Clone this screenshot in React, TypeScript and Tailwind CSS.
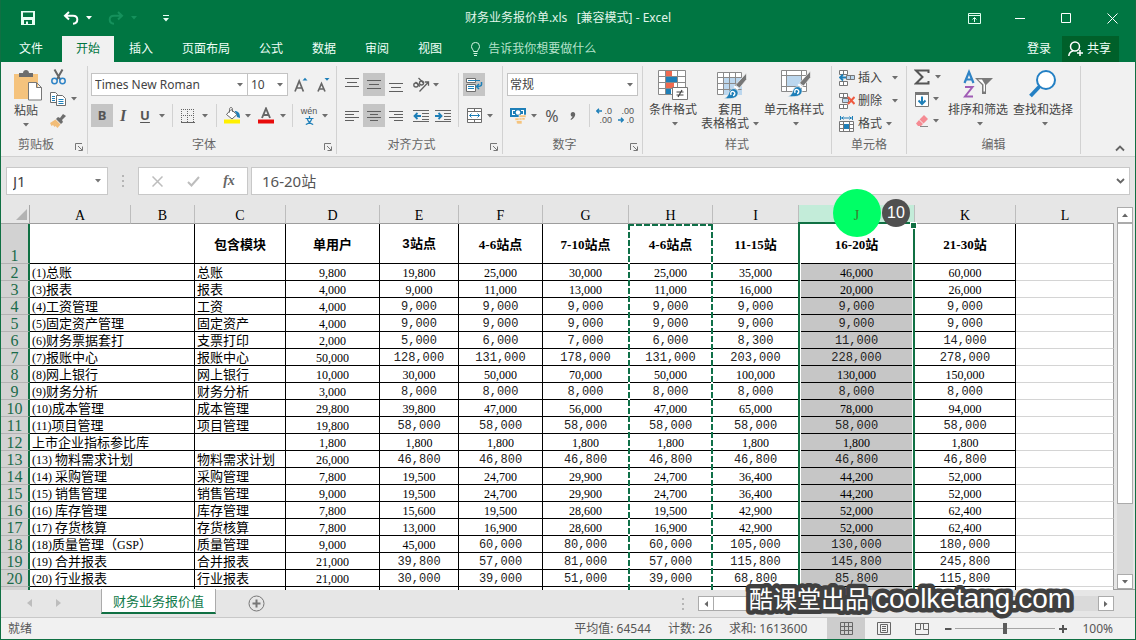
import React from "react";

const UI = "font-['Noto_Sans','Noto_Sans_CJK_SC',sans-serif]";
const SHEET = "font-['Liberation_Serif','Noto_Sans_CJK_SC',serif]";

type Row = { label: string; module: string; mono: number; values: string[] };

const rows: Row[] = [
  { label: "(1)总账", module: "总账", mono: 8, values: ["9,800", "19,800", "25,000", "30,000", "25,000", "35,000", "46,000", "60,000"] },
  { label: "(3)报表", module: "报表", mono: 8, values: ["4,000", "9,000", "11,000", "13,000", "11,000", "16,000", "20,000", "26,000"] },
  { label: "(4)工资管理", module: "工资", mono: 1, values: ["4,000", "9,000", "9,000", "9,000", "9,000", "9,000", "9,000", "9,000"] },
  { label: "(5)固定资产管理", module: "固定资产", mono: 1, values: ["4,000", "9,000", "9,000", "9,000", "9,000", "9,000", "9,000", "9,000"] },
  { label: "(6)财务票据套打", module: "支票打印", mono: 1, values: ["2,000", "5,000", "6,000", "7,000", "6,000", "8,300", "11,000", "14,000"] },
  { label: "(7)报账中心", module: "报账中心", mono: 1, values: ["50,000", "128,000", "131,000", "178,000", "131,000", "203,000", "228,000", "278,000"] },
  { label: "(8)网上银行", module: "网上银行", mono: 8, values: ["10,000", "30,000", "50,000", "70,000", "50,000", "100,000", "130,000", "150,000"] },
  { label: "(9)财务分析", module: "财务分析", mono: 1, values: ["3,000", "8,000", "8,000", "8,000", "8,000", "8,000", "8,000", "8,000"] },
  { label: "(10)成本管理", module: "成本管理", mono: 8, values: ["29,800", "39,800", "47,000", "56,000", "47,000", "65,000", "78,000", "94,000"] },
  { label: "(11)项目管理", module: "项目管理", mono: 1, values: ["19,800", "58,000", "58,000", "58,000", "58,000", "58,000", "58,000", "58,000"] },
  { label: "上市企业指标参比库", module: "", mono: 8, values: ["1,800", "1,800", "1,800", "1,800", "1,800", "1,800", "1,800", "1,800"] },
  { label: "(13) 物料需求计划", module: "物料需求计划", mono: 1, values: ["26,000", "46,800", "46,800", "46,800", "46,800", "46,800", "46,800", "46,800"] },
  { label: "(14) 采购管理", module: "采购管理", mono: 8, values: ["7,800", "19,500", "24,700", "29,900", "24,700", "36,400", "44,200", "52,000"] },
  { label: "(15) 销售管理", module: "销售管理", mono: 8, values: ["9,000", "19,500", "24,700", "29,900", "24,700", "36,400", "44,200", "52,000"] },
  { label: "(16) 库存管理", module: "库存管理", mono: 8, values: ["7,800", "15,600", "19,500", "28,600", "19,500", "42,900", "52,000", "62,400"] },
  { label: "(17) 存货核算", module: "存货核算", mono: 8, values: ["7,800", "13,000", "16,900", "28,600", "16,900", "42,900", "52,000", "62,400"] },
  { label: "(18)质量管理（GSP）", module: "质量管理", mono: 2, values: ["9,000", "45,000", "60,000", "80,000", "60,000", "105,000", "130,000", "180,000"] },
  { label: "(19) 合并报表", module: "合并报表", mono: 1, values: ["21,000", "39,800", "57,000", "81,000", "57,000", "115,800", "145,800", "245,800"] },
  { label: "(20) 行业报表", module: "行业报表", mono: 1, values: ["21,000", "30,000", "39,000", "51,000", "39,000", "68,800", "85,800", "115,800"] },
];

const headings = ["单用户", "3站点", "4-6站点", "7-10站点", "4-6站点", "11-15站", "16-20站", "21-30站"];

function Caret({ className = "" }: { className?: string }) {
  return (
    <svg className={"shrink-0 " + className} width="6" height="4" viewBox="0 0 6 4" fill="currentColor" aria-hidden="true">
      <path d="M0 0h6L3 3.5z" />
    </svg>
  );
}

function MenuArrow({ className = "w-2.5", label = "更多" }: { className?: string; label?: string }) {
  return (
    <button type="button" aria-label={label} className={"flex h-full items-center justify-center text-[#6e6e6e] " + className}>
      <Caret />
    </button>
  );
}

function Tool({ label, children, className = "w-[22px]", active = false }: { label: string; children: React.ReactNode; className?: string; active?: boolean }) {
  return (
    <button type="button" aria-label={label} className={"flex h-full shrink-0 items-center justify-center text-[#555] " + className + (active ? " bg-[#c5c5c5]" : "")}>
      {children}
    </button>
  );
}

function Group({ name, className, launcher = false, children }: { name: string; className: string; launcher?: boolean; children: React.ReactNode }) {
  return (
    <section aria-label={name} className={"flex shrink-0 flex-col pt-1 pb-0.5 " + className}>
      <div className="flex grow flex-col border-r border-[#d2d2d2]">
        <div className="h-[70px]">{children}</div>
        <div className="flex h-[18px] items-center text-xs leading-4 text-[#666]">
          <span className="grow text-center">{name}</span>
          {launcher && (
            <button type="button" aria-label={name + "设置"} className="flex w-4 justify-center pt-1">
              <svg width="9" height="9" viewBox="0 0 9 9" fill="none" stroke="#777">
                <path d="M.5 7V.5H7M3 3l4 4M7.5 3.500v4h-4" />
              </svg>
            </button>
          )}
        </div>
      </div>
    </section>
  );
}

function Lines({ rows: spec }: { rows: [number, number, number][] }) {
  return (
    <svg width="14" height="14" viewBox="0 0 14 14" stroke="#5f5f5f" aria-hidden="true">
      {spec.map(([y, a, b]) => (
        <path key={y} d={`M${a} ${y + 0.5}H${b}`} />
      ))}
    </svg>
  );
}

function Mixed({ text }: { text: string }) {
  return (
    <>
      {text.split(/([\x20-\x7e]+)/).map((part, i) => (i % 2 ? <span key={i} className="text-xs leading-[14px]">{part}</span> : part))}
    </>
  );
}

function TitleBar() {
  return (
    <header className="grid h-9 grid-cols-[1fr_auto_1fr] items-center bg-[#007642] text-white">
      <div className="flex items-center">
        <button type="button" aria-label="保存" className="ml-5">
          <svg width="14" height="14" viewBox="0 0 14 14">
            <path fill="#e8fff4" fillRule="evenodd" d="M0 0h14v14H0zM2 1.500v4.500h10V1.500zM3 9v4h2v-2.500h2V13h4V9z" />
          </svg>
        </button>
        <button type="button" aria-label="撤消" className="ml-[28px]">
          <svg width="16" height="14" viewBox="0 0 16 14" fill="none" stroke="#fff" strokeWidth="2">
            <path d="M6 1 2 4.700l4 3.800M2.500 4.700H10c3 0 4.300 1.700 4.300 3.800 0 2.500-1.800 4-4.300 4.200" />
          </svg>
        </button>
        <Caret className="ml-[7px]" />
        <button type="button" aria-label="恢复" className="ml-4" disabled>
          <svg width="16" height="14" viewBox="0 0 16 14" fill="none" stroke="#15915c" strokeWidth="2">
            <path d="M10 1l4 3.700-4 3.800M13.500 4.700H6c-3 0-4.300 1.700-4.300 3.800 0 2.500 1.800 4 4.300 4.200" />
          </svg>
        </button>
        <Caret className="ml-[7px] text-[#15915c]" />
        <button type="button" aria-label="自定义快速访问工具栏" className="ml-[26px]">
          <svg width="6" height="7" viewBox="0 0 6 7" fill="#e8fff4">
            <path d="M0 0h6v1H0zM0 3h6L3 6.500z" />
          </svg>
        </button>
      </div>
      <h1 className="text-xs whitespace-pre text-[#e0f5ea]">财务业务报价单.xls   [兼容模式] - Excel</h1>
      <div className="flex justify-end">
        <button type="button" aria-label="功能区显示选项" className="flex w-[46px] justify-center">
          <svg width="13" height="11" viewBox="0 0 13 11" fill="none" stroke="#e0fff0">
            <path d="M.5.5h12v10H.5zM.5 2.500h12M6.500 9V4.500M4.500 6.500l2-2 2 2" />
          </svg>
        </button>
        <button type="button" aria-label="最小化" className="flex w-[46px] justify-center">
          <svg width="11" height="11" viewBox="0 0 11 11" stroke="#fff"><path d="M0 5.500h10" /></svg>
        </button>
        <button type="button" aria-label="最大化" className="flex w-[46px] justify-center">
          <svg width="11" height="11" viewBox="0 0 11 11" fill="none" stroke="#fff"><path d="M.5.5h9v9h-9z" /></svg>
        </button>
        <button type="button" aria-label="关闭" className="flex w-[46px] justify-center">
          <svg width="11" height="11" viewBox="0 0 11 11" stroke="#fff"><path d="M.5.5l10 10M10.500.5l-10 10" /></svg>
        </button>
      </div>
    </header>
  );
}

function Tabs() {
  return (
    <nav className="flex h-[26px] items-stretch gap-px bg-[#007642] pl-1 text-xs text-[#f0fff8]">
      <button type="button" className="mr-1 px-3.5">文件</button>
      <button type="button" className="bg-[#f1f1f1] px-3.5 text-[#007642]">开始</button>
      {["插入", "页面布局", "公式", "数据", "审阅", "视图"].map((t) => (
        <button type="button" key={t} className="px-3.5">{t}</button>
      ))}
      <button type="button" className="ml-3.5 flex items-center gap-2 text-[#b5e2cb]">
        <svg width="9" height="14" viewBox="0 0 9 14" fill="none" stroke="#d4f5e4">
          <path d="M2.500 9.500C2.500 7.500.5 7 .5 4.400a4 4 0 0 1 8 0C8.500 7 6.500 7.500 6.500 9.500zM2.500 11.500h4M3 13.500h3" />
        </svg>
        告诉我你想要做什么
      </button>
      <button type="button" className="mr-2.5 ml-auto">登录</button>
      <button type="button" className="mr-4 flex items-center gap-1 bg-[#00602a] pr-2 pl-1.5">
        <svg width="15" height="16" viewBox="0 0 15 16" fill="none" stroke="#fff" strokeWidth="1.500">
          <circle cx="7" cy="5.500" r="4.500" />
          <path d="M.8 15c.2-3 1.800-4.300 4.200-5.200M12 9v6M9 12h6" />
        </svg>
        共享
      </button>
    </nav>
  );
}

function BrushOver() {
  return (
    <>
      <path fill="#777" stroke="#f1f1f1" strokeWidth=".7" d="M29.500 4v6.500L22.500 19l-4-3z" />
      <path fill="#fff" d="M18 16.500l4 3-1.500 1.500-4-3z" />
      <path fill="#1e7fb8" stroke="#f1f1f1" strokeWidth=".7" d="M6 29.500c4-.5 5-3 6-6 1.200-3.500 4.500-5 7.200-3s2.300 5.500-.2 7.500-7 1.800-13 1.500z" />
      <path fill="none" stroke="#fff" strokeWidth="1.400" d="M14 26c-1-3 1-4.500 3-3s0 3.500-1 3.500" />
    </>
  );
}

function Ribbon() {
  return (
    <div className="flex h-[95px] overflow-hidden border-b border-[#d0d0d0] bg-[#f1f1f1] text-xs text-[#444]">
      <Group name="剪贴板" className="w-[87px]" launcher>
        <div className="flex">
          <button type="button" className="mt-1 ml-3 flex w-[30px] flex-col items-center">
            <svg className="mb-[3px]" width="30" height="31" viewBox="0 0 30 31">
              <path fill="#f5c37d" d="M1 4h24v25H1z" />
              <path fill="#6d6d6d" d="M6 3h4c0-4 6-4 6 0h4v4H6z" />
              <path fill="#fff" stroke="#777" d="M15.500 12.500h8l5 5v12.500h-13zM23.500 12.500v5h5" />
            </svg>
            <span className="-ml-1 leading-[14px] whitespace-nowrap">粘贴</span>
            <span className="flex h-3.5 items-center text-[#6e6e6e]"><Caret className="-ml-1" /></span>
          </button>
          <div className="ml-1.5">
            <div className="h-[22px]">
              <Tool label="剪切" className="w-[18px]">
                <svg width="15" height="16" viewBox="0 0 15 16" fill="none">
                  <path stroke="#666" strokeWidth="2" d="M3.500.5 9.500 11M11.500.5 5.500 11" />
                  <circle cx="3.500" cy="12" r="2.700" stroke="#2f84c6" strokeWidth="1.500" />
                  <circle cx="11.500" cy="12" r="2.700" stroke="#2f84c6" strokeWidth="1.500" />
                </svg>
              </Tool>
            </div>
            <div className="flex h-[22px]">
              <Tool label="复制" className="w-[18px]">
                <svg width="16" height="14" viewBox="0 0 16 14" fill="#fff" stroke="#6d6d6d">
                  <path d="M.5.5h5l2 2v8h-7z" />
                  <path stroke="#1e7fb8" d="M2 4.500h3M2 6.500h3M2 8.500h3" />
                  <path d="M6.500 3.500h6l3 3v7h-9z" />
                  <path stroke="#1e7fb8" d="M8.500 7.500h5M8.500 9.500h5M8.500 11.500h5" />
                </svg>
              </Tool>
              <MenuArrow className="ml-0.5 w-2.5" />
            </div>
            <div className="h-[22px]">
              <Tool label="格式刷" className="w-[18px]">
                <svg width="16" height="14" viewBox="0 0 16 14">
                  <path fill="#6d6d6d" d="M13 0l3 2-4 4 1 2-2 2-5-5 2-2 2 1z" />
                  <path fill="#f2bd78" d="M5.500 5.500l5 5-3 3.500-2-2-1 1-1.500-2-1.500 1L0 9z" />
                </svg>
              </Tool>
            </div>
          </div>
        </div>
      </Group>

      <Group name="字体" className="w-[249px]" launcher>
        <div className="flex flex-col gap-2 pt-[7px] pl-[3px]">
          <div className="flex h-[23px] items-stretch">
            <label className="relative flex w-[157px] border border-[#c3c3c3] bg-white">
              <select aria-label="字体" className="w-full appearance-none pl-[3px] text-xs"><option>Times New Roman</option></select>
              <Caret className="pointer-events-none absolute top-[9px] right-1 text-[#6e6e6e]" />
            </label>
            <label className="relative -ml-px flex w-[41px] border border-[#c3c3c3] bg-white">
              <select aria-label="字号" className="w-full appearance-none pl-[3px] text-xs"><option>10</option></select>
              <Caret className="pointer-events-none absolute top-[9px] right-1 text-[#6e6e6e]" />
            </label>
            <Tool label="增大字号" className="ml-0.5 w-[22px]">
              <svg width="14" height="16" viewBox="0 0 14 16">
                <path fill="none" stroke="#666" strokeWidth="1.700" d="M1 14.500 5.200 4l4.200 10.500M2.500 11H8" />
                <path fill="#1e7fb8" d="M8.500 3.500 11 .8l2.500 2.700z" />
              </svg>
            </Tool>
            <Tool label="减小字号">
              <svg width="14" height="16" viewBox="0 0 14 16">
                <path fill="none" stroke="#666" strokeWidth="1.700" d="M2 14.500 5.500 6.500 9 14.500M3.500 12h4.500" />
                <path fill="#1e7fb8" d="M8.500 1h5L11 3.700z" />
              </svg>
            </Tool>
          </div>
          <div className="flex h-[23px] items-stretch">
            <Tool label="加粗" active><b className="text-[13px]">B</b></Tool>
            <Tool label="倾斜" className="w-5"><i className="font-['Liberation_Serif',serif] text-base font-bold">I</i></Tool>
            <Tool label="下划线" className="w-6"><u className="text-[13px] font-bold underline-offset-2">U</u></Tool>
            <MenuArrow />
            <span className="mx-[5px] w-px bg-[#d2d2d2]" />
            <Tool label="边框" className="w-5">
              <svg width="14" height="14" viewBox="0 0 14 14" stroke="#666" fill="none">
                <path strokeDasharray="1 1" d="M0 .5h14M0 6.500h14M.5 0v14M6.500 0v14M12.500 0v14" />
                <path d="M0 13.500h14" />
              </svg>
            </Tool>
            <MenuArrow className="w-3.5" />
            <span className="mx-1 w-px bg-[#d2d2d2]" />
            <Tool label="填充颜色">
              <svg width="17" height="17" viewBox="0 0 17 17">
                <path fill="#fff" stroke="#666" d="M7 2.500l6 5-5 4.500-5.500-4.500zM5.500 5.500V2.300c0-2.400 3-2.400 3 0v2.500" />
                <path fill="#1e7fb8" d="M10.500 4c4 0 5.500 2 5.500 7l-3-1-.5-3z" />
                <path fill="#fff000" d="M0 12.500h16v4H0z" />
              </svg>
            </Tool>
            <MenuArrow />
            <Tool label="字体颜色" className="w-[26px]">
              <svg width="16" height="17" viewBox="0 0 16 17">
                <path fill="none" stroke="#666" strokeWidth="1.900" d="M4 11 8 1.500 12 11M5.500 8h5" />
                <path fill="#e80c0c" d="M0 12.500h16v4H0z" />
              </svg>
            </Tool>
            <MenuArrow className="w-2" />
            <span className="mx-[5px] w-px bg-[#d2d2d2]" />
            <Tool label="拼音指南" className="w-[22px] flex-col font-['Liberation_Sans','Noto_Sans_CJK_SC',sans-serif]">
              <span className="text-[9px] leading-[10px]">wén</span>
              <svg width="9" height="9" viewBox="0 0 9 9" fill="none" stroke="#1e7fb8" strokeWidth="1.200">
                <path d="M4.500 0v2M.5 2.500h8M6.800 2.500C6 5.500 4 7.500.8 8.500M2.200 2.500C3 5.500 5 7.500 8.200 8.500" />
              </svg>
            </Tool>
            <MenuArrow />
          </div>
        </div>
      </Group>

      <Group name="对齐方式" className="w-[166px]" launcher>
        <div className="flex pt-[7px] pl-1">
          <div className="flex flex-col gap-2">
            <div className="flex h-[23px]">
              <Tool label="顶端对齐"><Lines rows={[[0, 0, 14], [4, 2, 12], [8, 0, 14]]} /></Tool>
              <Tool label="垂直居中" active><Lines rows={[[2, 0, 14], [6, 2, 12], [10, 0, 14]]} /></Tool>
              <Tool label="底端对齐"><Lines rows={[[5, 0, 14], [9, 2, 12], [13, 0, 14]]} /></Tool>
              <Tool label="方向" className="ml-[3px] w-[22px]">
                <svg width="18" height="16" viewBox="0 0 18 16" fill="none" stroke="#606060" strokeWidth="1.300">
                  <ellipse cx="4" cy="8" rx="2.200" ry="2" />
                  <path d="M3.500 5 8 9.500M6.500 1l5.500 5.500M16.500 5 7.500 14.500M12.800 5h3.700v3.800" />
                  <circle cx="9.500" cy="6" r="2" />
                </svg>
              </Tool>
              <MenuArrow className="-ml-px w-2.5" />
            </div>
            <div className="flex h-[23px]">
              <Tool label="左对齐"><Lines rows={[[2, 0, 14], [5, 0, 9], [8, 0, 14], [11, 0, 9]]} /></Tool>
              <Tool label="居中" active><Lines rows={[[2, 0, 14], [5, 3, 11], [8, 0, 14], [11, 3, 11]]} /></Tool>
              <Tool label="右对齐"><Lines rows={[[2, 0, 14], [5, 5, 14], [8, 0, 14], [11, 5, 14]]} /></Tool>
              <Tool label="减少缩进量" className="ml-[3px] w-[22px]">
                <svg width="16" height="14" viewBox="0 0 16 14" fill="none">
                  <path stroke="#666" d="M0 1.500h16M9 4.500h7M9 7.500h7M9 10.500h7M0 12.500h16" />
                  <path stroke="#1e7fb8" strokeWidth="1.800" d="M8 7H1.500M4.500 4l-3 3 3 3" />
                </svg>
              </Tool>
              <Tool label="增加缩进量">
                <svg width="16" height="14" viewBox="0 0 16 14" fill="none">
                  <path stroke="#666" d="M0 1.500h16M9 4.500h7M9 7.500h7M9 10.500h7M0 12.500h16" />
                  <path stroke="#1e7fb8" strokeWidth="1.800" d="M0 7h6.500M3.500 4l3 3-3 3" />
                </svg>
              </Tool>
            </div>
          </div>
          <span className="mx-1 w-px bg-[#d2d2d2]" />
          <div className="flex flex-col gap-2">
            <div className="flex h-[23px]">
              <Tool label="自动换行" active>
                <svg width="17" height="16" viewBox="0 0 17 16" fill="#fff" stroke="#6d6d6d">
                  <path d="M.5 1.500h9v4h-9zM.5 7.500h9v7h-9z" />
                  <path stroke="#1e7fb8" fill="none" d="M2 3.500h12M2 9.500h6M2 11.500h6" />
                  <path stroke="#1e7fb8" strokeWidth="1.500" fill="none" d="M15.500 5v2.500c0 1.500-1 2-4.500 2M13 7l-2.500 2.500L13 12" />
                </svg>
              </Tool>
            </div>
            <div className="flex h-[23px]">
              <Tool label="合并后居中">
                <svg width="15" height="15" viewBox="0 0 15 15" fill="#fff" stroke="#6d6d6d">
                  <path d="M.5.5h14v14H.5zM.5 3.500h14M.5 11.500h14M7.500.5v3M7.500 11.500v3" />
                  <path stroke="#1e7fb8" fill="none" d="M2.500 7.500h10M4.500 5.500l-2 2 2 2M10.500 5.500l2 2-2 2" />
                </svg>
              </Tool>
              <MenuArrow />
            </div>
          </div>
        </div>
      </Group>

      <Group name="数字" className="w-[140px]" launcher>
        <div className="flex flex-col gap-2 px-1 pt-[7px]">
          <label className="relative flex h-[23px] w-full border border-[#c3c3c3] bg-white">
            <select aria-label="数字格式" className="w-full appearance-none pl-0.5 text-xs"><option>常规</option></select>
            <Caret className="pointer-events-none absolute top-[9px] right-1 text-[#6e6e6e]" />
          </label>
          <div className="flex h-[23px]">
            <Tool label="会计数字格式">
              <svg width="16" height="16" viewBox="0 0 16 16">
                <path fill="#1e7fb8" d="M0 0h16v9H0z" />
                <path fill="#fff" d="M2 2h3v1H3v3h2v1H2zM14 2h-3v1h2v3h-2v1h3z" />
                <circle cx="8" cy="4.500" r="2.200" fill="#fff" />
                <path fill="#f5c37d" stroke="#f1f1f1" strokeWidth=".6" d="M9 7h7v2.500H9zM5 10h7v2.500H5zM9 9.500h6V12H9zM6 12.500h6V16H7z" />
              </svg>
            </Tool>
            <MenuArrow />
            <Tool label="百分比样式" className="w-[26px]"><span className="text-base">%</span></Tool>
            <Tool label="千位分隔样式" className="w-4">
              <svg width="6" height="8" viewBox="0 0 6 8" fill="#666"><path d="M3 0c3 0 3.500 5-2 8l-.5-.8C2 6 2.500 5 2.500 4.500 0 4.500 0 0 3 0z" /></svg>
            </Tool>
            <span className="mr-[3px] ml-2 w-px bg-[#d2d2d2]" />
            <Tool label="增加小数位数" className="w-[22px] flex-col font-['Liberation_Sans',sans-serif]">
              <span className="flex w-4 items-center justify-between text-[9px] leading-[9px]">
                <svg width="6" height="6" viewBox="0 0 6 6" fill="none" stroke="#1e7fb8" strokeWidth="1.400"><path d="M6 3H1M3 .7.800 3 3 5.300" /></svg>.0
              </span>
              <span className="w-4 text-right text-[9px] leading-[9px]">.00</span>
            </Tool>
            <Tool label="减少小数位数" className="w-[22px] flex-col font-['Liberation_Sans',sans-serif]">
              <span className="w-4 text-right text-[9px] leading-[9px]">.00</span>
              <span className="flex w-4 items-center justify-between text-[9px] leading-[9px]">
                <svg width="6" height="6" viewBox="0 0 6 6" fill="none" stroke="#1e7fb8" strokeWidth="1.400"><path d="M0 3h5M3 .7 5.200 3 3 5.300" /></svg>.0
              </span>
            </Tool>
          </div>
        </div>
      </Group>

      <Group name="样式" className="w-[189px]">
        <div className="flex pt-[3px] pl-[3px] leading-[14px]">
          <button type="button" className="flex w-[54px] flex-col items-center">
            <svg className="mb-[3px]" width="30" height="31" viewBox="0 0 30 31">
              <path fill="#fff" stroke="#8a8a8a" d="M.5 1.500h27v24H.5zM.5 7.500h27M.5 13.500h27M.5 19.500h27M7.500 1.500v24M19.500 1.500v24" />
              <path fill="#ef6a50" d="M8 2h6v5H8zM8 14h8v5H8z" />
              <path fill="#1e7fb8" d="M8 8h11v5H8zM8 20h5v5H8z" />
              <path fill="#fff" stroke="#777" d="M14.500 18.500h15v12h-15z" />
              <path stroke="#444" strokeWidth="1.200" d="M18.500 23h7M18.500 26h7M24 21l-4 7" />
            </svg>
            <span>条件格式</span>
            <span className="flex h-3.5 items-center text-[#6e6e6e]"><Caret className="ml-1" /></span>
          </button>
          <button type="button" className="flex w-[60px] flex-col items-center">
            <svg className="mb-[3px] ml-1" width="30" height="31" viewBox="0 0 30 31">
              <path fill="#fff" stroke="#8a8a8a" d="M.5 3.500h24v22H.5z" />
              <path fill="#bcd7ee" d="M6 9h19v17H6z" />
              <path fill="none" stroke="#8a8a8a" d="M.5 8.500h24M.5 14.500h24M.5 20.500h24M6.500 3.500v22M12.500 3.500v22M18.500 3.500v22" />
              <BrushOver />
            </svg>
            <span>套用</span>
            <span className="flex items-center gap-1">表格格式<Caret className="text-[#6e6e6e]" /></span>
          </button>
          <button type="button" className="flex w-[68px] flex-col items-center">
            <svg className="mb-[3px] ml-1" width="30" height="31" viewBox="0 0 30 31">
              <path fill="#fff" stroke="#8a8a8a" d="M.5 1.500h25v21H.5zM.5 6.500h25M.5 17.500h25M5.500 1.500v21M20.500 1.500v21" />
              <path fill="#bcd7ee" d="M6 7h14v10H6z" />
              <g transform="translate(0 -2)"><BrushOver /></g>
            </svg>
            <span>单元格样式</span>
            <span className="flex h-3.5 items-center text-[#6e6e6e]"><Caret className="ml-1" /></span>
          </button>
        </div>
      </Group>

      <Group name="单元格" className="w-[75px]">
        <div className="flex flex-col pl-[7px]">
          <button type="button" className="flex h-[23px] items-center">
            <svg width="16" height="16" viewBox="0 0 16 16" fill="#fff" stroke="#777">
              <path d="M.5.5h8v4h-8zM4.500.5v4M.5 11.500h8v4h-8zM4.500 11.500v4" />
              <path fill="#bcd7ee" d="M7.500 5.500h8v4h-8zM11.500 5.500v4" />
              <path fill="none" stroke="#1e7fb8" strokeWidth="1.800" d="M7 7.500H1M4 4.500l-3 3 3 3" />
            </svg>
            <span className="ml-[3px]">插入</span>
            <Caret className="ml-2.5 text-[#6e6e6e]" />
          </button>
          <button type="button" className="flex h-[23px] items-center">
            <svg width="16" height="16" viewBox="0 0 16 16" fill="#fff" stroke="#777">
              <path d="M.5.5h8v4h-8zM4.500.5v4M.5 11.500h8v4h-8zM4.500 11.500v4" />
              <path fill="#bcd7ee" d="M3.500 5.500h6v4h-6z" />
              <path fill="none" stroke="#ef5a40" strokeWidth="2" d="M9 4l6.500 7M15.500 4 9 11" />
            </svg>
            <span className="ml-[3px]">删除</span>
            <Caret className="ml-2.5 text-[#6e6e6e]" />
          </button>
          <button type="button" className="flex h-[23px] items-center">
            <svg width="16" height="16" viewBox="0 0 16 16" fill="#fff" stroke="#777">
              <path stroke="#1e7fb8" d="M1.500 0v4M13.500 0v4M2 2h11M4.500.5 3 2l1.500 1.500M10.500.5 12 2l-1.500 1.500" />
              <path d="M.5 5.500h14v10H.5zM.5 8.500h14M.5 12.500h14M4.500 5.500v10M10.500 5.500v10" />
              <path fill="#1e7fb8" stroke="none" d="M5 8h5v5H5z" />
            </svg>
            <span className="ml-[3px]">格式</span>
            <Caret className="ml-1 text-[#6e6e6e]" />
          </button>
        </div>
      </Group>

      <Group name="编辑" className="w-[174px]">
        <div className="flex pl-1.5">
          <div className="w-8">
            <div className="flex h-[22px]">
              <Tool label="自动求和" className="w-[18px]">
                <svg width="16" height="16" viewBox="0 0 16 16" fill="none" stroke="#555" strokeWidth="2"><path d="M14.500 4V1.500H2L8.500 8 2 14.500h12.500V12" /></svg>
              </Tool>
              <MenuArrow className="ml-0.5 w-2.5" />
            </div>
            <div className="flex h-[22px]">
              <Tool label="填充" className="w-[18px]">
                <svg width="14" height="15" viewBox="0 0 14 15">
                  <path fill="#fff" stroke="#777" d="M.5.5h13v14H.5z" />
                  <path fill="#777" d="M0 0h14v3H0z" />
                  <path fill="none" stroke="#1e7fb8" strokeWidth="2" d="M7 4.500V12M3.500 8.500 7 12l3.500-3.500" />
                </svg>
              </Tool>
              <MenuArrow className="w-2.5" />
            </div>
            <div className="flex h-[22px]">
              <Tool label="清除" className="w-[18px]">
                <svg width="14" height="14" viewBox="0 0 14 14">
                  <path fill="#f58b93" d="M9 1l4 4-4.500 4.500-4-4zM4 6l4 4-2 2H3L1 9.500z" />
                  <path stroke="#888" d="M5 12.500h8" />
                </svg>
              </Tool>
              <MenuArrow className="w-2.5" />
            </div>
          </div>
          <button type="button" className="flex w-[66px] flex-col items-center pt-[3px] leading-[14px]">
            <svg className="mb-[3px]" width="30" height="31" viewBox="0 0 30 31" fill="none">
              <path stroke="#2f84c6" strokeWidth="2.200" d="M1.500 14 6 3l4.500 11M3 10.500h6" />
              <path stroke="#a05cb5" strokeWidth="2" d="M2 18h7.500L2 27.500h8" />
              <path fill="#7a7a7a" d="M12 9h18l-7 7v9h-4v-9z" />
              <path fill="#fff" d="M15 10.500h4l3 5v7h-1.500v-7z" />
            </svg>
            <span>排序和筛选</span>
            <span className="flex h-3.5 items-center text-[#6e6e6e]"><Caret className="ml-1" /></span>
          </button>
          <button type="button" className="flex w-16 flex-col items-center pt-[3px] leading-[14px]">
            <svg className="mb-[3px]" width="30" height="31" viewBox="0 0 30 31" fill="none" stroke="#2480c4">
              <circle cx="18" cy="11" r="9" fill="#fff" strokeWidth="2" />
              <path strokeWidth="3.800" d="M11.500 17.500 2.500 27" />
            </svg>
            <span>查找和选择</span>
            <span className="flex h-3.5 items-center text-[#6e6e6e]"><Caret className="ml-1" /></span>
          </button>
        </div>
      </Group>
      <button type="button" aria-label="折叠功能区" className="mr-2.5 mb-1 ml-auto self-end">
        <svg width="10" height="7" viewBox="0 0 10 7" fill="none" stroke="#666" strokeWidth="1.800"><path d="M1 5.500l4-4 4 4" /></svg>
      </button>
    </div>
  );
}

function FormulaBar() {
  return (
    <div className="flex h-12 items-stretch px-[5px] pt-2.5 pb-2.5 text-[15px] text-[#444]">
      <label className="relative flex w-[102px] border border-[#c8c8c8] bg-white">
        <input aria-label="名称框" defaultValue="J1" className="w-full pl-1.5 outline-none" />
        <Caret className="pointer-events-none absolute top-[11px] right-1.5 text-[#777]" />
      </label>
      <span className="flex w-[30px] items-center justify-center">
        <svg width="2" height="12" viewBox="0 0 2 12" fill="#b5b5b5"><path d="M0 0h2v2H0zM0 5h2v2H0zM0 10h2v2H0z" /></svg>
      </span>
      <div className="mr-[3px] flex w-[110px] border border-[#c8c8c8] bg-white">
        <button type="button" aria-label="取消" className="flex flex-1 items-center justify-center">
          <svg width="11" height="11" viewBox="0 0 11 11" stroke="#bdbdbd" strokeWidth="1.500"><path d="M.5.5l10 10M10.500.5l-10 10" /></svg>
        </button>
        <button type="button" aria-label="输入" className="flex flex-1 items-center justify-center">
          <svg width="13" height="11" viewBox="0 0 13 11" fill="none" stroke="#bdbdbd" strokeWidth="2"><path d="M1 6l3.500 3.500L12 1" /></svg>
        </button>
        <button type="button" aria-label="插入函数" className="flex flex-1 items-center justify-center font-['Liberation_Serif',serif] text-sm font-bold text-[#666] italic">
          fx
        </button>
      </div>
      <div className="flex grow items-center border border-[#c8c8c8] bg-white">
        <input aria-label="编辑栏" defaultValue="16-20站" className="min-w-0 grow pl-2.5 text-[#555] outline-none" />
        <button type="button" aria-label="展开编辑栏" className="mr-1">
          <svg width="9" height="6" viewBox="0 0 9 6" fill="none" stroke="#666" strokeWidth="1.800"><path d="M1 1l3.500 3.500L8 1" /></svg>
        </button>
      </div>
    </div>
  );
}

function CopyOutline() {
  return (
    <span className="pointer-events-none absolute top-0 -right-px -left-px h-[400px]">
      <span className="absolute inset-x-0 top-0 h-0.5 bg-[repeating-linear-gradient(90deg,#0f7048_0_6px,#fff_6px_8px)]" />
      <span className="absolute inset-y-0 left-0 w-0.5 bg-[repeating-linear-gradient(180deg,#0f7048_0_6px,#fff_6px_8px)]" />
      <span className="absolute inset-y-0 right-0 w-0.5 bg-[repeating-linear-gradient(180deg,#0f7048_0_6px,#fff_6px_8px)]" />
    </span>
  );
}

function SelectionOutline() {
  return (
    <span className="pointer-events-none absolute -top-0.5 -right-px -left-px h-[400px] border-2 border-[#107043] shadow-[inset_0_0_0_1px_#fff]">
      <span className="absolute -top-px -right-[3px] size-[5px] bg-[#107043] outline outline-white" />
    </span>
  );
}

const GRID = "border-r border-b border-black";
const ROW_HEAD = "border-r-2 border-b border-r-[#107043] border-b-[#b3b3b3] bg-[#d2d2d2] p-0 text-base font-normal text-[#1b6b4a]";
const EMPTY_CELL = "border-r border-b border-r-[#9d9d9d] border-b-[#d4d4d4]";

function Sheet() {
  const letters = ["A", "B", "C", "D", "E", "F", "G", "H", "I", "J", "K", "L"];
  return (
    <main className="flex min-h-0 grow border-b border-[#9d9d9d] [clip-path:inset(-20px_0_0_0)]">
      <div className="h-0 min-w-0 grow">
        <table className={"w-full table-fixed border-separate border-spacing-0 text-[13px] leading-[14px] text-black " + SHEET}>
          <colgroup>
            <col className="w-[29px]" /><col className="w-[101px]" /><col className="w-[64px]" /><col className="w-[91px]" />
            <col className="w-[94px]" /><col className="w-[79px]" /><col className="w-[84px]" /><col className="w-[86px]" />
            <col className="w-[84px]" /><col className="w-[86px]" /><col className="w-[116px]" /><col className="w-[101px]" />
            <col />
          </colgroup>
          <thead>
            <tr className="h-[19px] text-sm">
              <th scope="col" aria-label="全选" className="border-r border-b border-[#a8a8a8] p-0">
                <svg className="mr-0.5 ml-auto" width="11" height="11" viewBox="0 0 11 11" fill="#b3b3b3"><path d="M11 0v11H0z" /></svg>
              </th>
              {letters.map((l) => (
                <th
                  key={l}
                  scope="col"
                  className={
                    "h-[19px] border-b border-b-[#9d9d9d] p-0 pt-1 font-normal leading-[14px] " +
                    (l === "J" ? "relative border-r border-r-[#bdbdbd] bg-[#c3ecd9] text-[#3c7a2c]" : l === "L" ? "" : "border-r border-r-[#bdbdbd]")
                  }
                >
                  {l === "J" ? (
                    <>
                      <span className="absolute -top-4 left-1/2 z-10 flex size-12 -translate-x-1/2 items-center justify-center rounded-full bg-[#00ff66] pt-1.5">J</span>
                      <span className="absolute -top-1.5 left-[83px] z-10 flex size-7 items-center justify-center rounded-full bg-[#505050] font-['Liberation_Sans',sans-serif] text-base text-white">10</span>
                    </>
                  ) : (
                    l
                  )}
                </th>
              ))}
            </tr>
          </thead>
          <tbody className="bg-white">
            <tr>
              <th scope="row" className={ROW_HEAD + " h-10 align-bottom leading-[15px]"}>1</th>
              <td colSpan={2} className={GRID} />
              <td className={GRID + " p-0 pt-0.5 text-center font-bold"}>包含模块</td>
              {headings.map((h, i) => (
                <td key={i} className={GRID + " relative p-0 pt-0.5 text-center font-bold"}>
                  {i === 1 ? <><span className="font-['Liberation_Mono',monospace]">3</span>站点</> : h}
                  {i === 4 && <CopyOutline />}
                  {i === 6 && <SelectionOutline />}
                </td>
              ))}
              <td className={EMPTY_CELL} />
            </tr>
            {rows.map((r, n) => (
              <tr key={n}>
                <th scope="row" className={ROW_HEAD + " h-[17px] pt-0.5 leading-[14px]"}>{n + 2}</th>
                <td colSpan={2} className={GRID + " overflow-hidden p-0 pt-0.5 pl-0.5 whitespace-nowrap"}><Mixed text={r.label} /></td>
                <td className={GRID + " overflow-hidden p-0 pt-0.5 pl-0.5 whitespace-nowrap"}>{r.module}</td>
                {r.values.map((v, i) => (
                  <td
                    key={i}
                    className={
                      GRID + " p-0 text-center text-xs " +
                      (i >= r.mono ? "pt-[3px] font-['Liberation_Mono',monospace] leading-[13px] text-[#222]" : "pt-0.5 leading-[14px]") +
                      (i === 6 ? " bg-[#c6c6c6]" : "")
                    }
                  >
                    {v}
                  </td>
                ))}
                <td className={EMPTY_CELL} />
              </tr>
            ))}
            <tr>
              <th className={ROW_HEAD + " h-[17px]"} />
              <td colSpan={2} className={GRID} />
              <td className={GRID} />
              {headings.map((_, i) => (
                <td key={i} className={GRID + (i === 6 ? " bg-[#c6c6c6]" : "")} />
              ))}
              <td className={EMPTY_CELL} />
            </tr>
          </tbody>
        </table>
      </div>
      <div className="flex w-[21px] shrink-0 flex-col bg-[#e6e6e6] pt-0.5 pr-0.5 pl-[3px]">
        <button type="button" aria-label="向上滚动" className="flex h-4 shrink-0 items-center justify-center border border-[#ababab] bg-white text-[#666]"><Caret className="rotate-180" /></button>
        <div className="flex grow flex-col bg-[#dadada]">
          <div className="h-4/5 border border-[#ababab] bg-white" />
        </div>
        <button type="button" aria-label="向下滚动" className="flex h-[15px] shrink-0 items-center justify-center border border-[#ababab] bg-white text-[#666]"><Caret /></button>
      </div>
    </main>
  );
}

function SheetTabs() {
  return (
    <div className="relative flex h-[27px] shrink-0 items-start">
      <div className="flex w-[100px] items-center gap-6 self-center pb-0.5 pl-[26px] text-[#bdbdbd]">
        <svg width="5" height="8" viewBox="0 0 5 8" fill="currentColor"><path d="M5 0v8L0 4z" /></svg>
        <svg width="5" height="8" viewBox="0 0 5 8" fill="currentColor"><path d="M0 0v8l5-4z" /></svg>
      </div>
      <button type="button" className="-mt-px h-[25px] border-x border-b-2 border-x-[#ababab] border-b-[#107043] bg-white px-[11px] text-[13px] leading-4 text-[#107a4a]">财务业务报价值</button>
      <button type="button" aria-label="新工作表" className="mt-[5px] ml-8">
        <svg width="17" height="17" viewBox="0 0 17 17" fill="none" stroke="#777"><circle cx="8.500" cy="8.500" r="7.500" /><path strokeWidth="2" d="M8.500 4.500v8M4.500 8.500h8" /></svg>
      </button>
      <svg className="mt-2 mr-3.5 ml-auto" width="2" height="12" viewBox="0 0 2 12" fill="#b5b5b5"><path d="M0 0h2v2H0zM0 5h2v2H0zM0 10h2v2H0z" /></svg>
      <div className="mt-1.5 mr-[21px] flex h-[15px] w-[416px]">
        <button type="button" aria-label="向左滚动" className="flex w-4 items-center justify-center border border-[#ababab] bg-white text-[#666]"><Caret className="rotate-90" /></button>
        <div className="grow bg-[#dadada]"><div className="h-full w-11/12 border-y border-r border-[#ababab] bg-white" /></div>
        <button type="button" aria-label="向右滚动" className="flex w-4 items-center justify-center border border-[#ababab] bg-white text-[#666]"><Caret className="-rotate-90" /></button>
      </div>
      <svg className="pointer-events-none absolute -top-2.5 right-[54px] z-20" width="338" height="40" viewBox="0 0 338 40">
        <g fill="#fff" stroke="#404040" strokeWidth="9" strokeLinejoin="round" style={{ paintOrder: "stroke" }}>
          <text x="6" y="28" fontSize="24" className="font-['Noto_Sans_CJK_SC',sans-serif]">酷课堂出品</text>
          <text x="132" y="28" fontSize="28" className="font-['Liberation_Sans',sans-serif]">coolketang.com</text>
        </g>
      </svg>
    </div>
  );
}

function StatusBar() {
  return (
    <footer className="flex h-[22px] shrink-0 items-center border-t border-[#c8c8c8] bg-[#f1f1f1] text-xs leading-4 text-[#555]">
      <span className="ml-[7px]">就绪</span>
      <span className="ml-auto">平均值: 64544</span>
      <span className="ml-[17px]">计数: 26</span>
      <span className="mr-5 ml-[17px]">求和: 1613600</span>
      <button type="button" aria-label="普通" className="flex w-[38px] items-center justify-center self-stretch bg-[#cdcdcd]">
        <svg width="13" height="13" viewBox="0 0 13 13" fill="none" stroke="#666"><path d="M.5.5h12v12H.5zM.5 4.500h12M.5 8.500h12M4.500.5v12M8.500.5v12" /></svg>
      </button>
      <button type="button" aria-label="页面布局" className="flex w-[38px] items-center justify-center">
        <svg width="14" height="13" viewBox="0 0 14 13" fill="none" stroke="#666"><path d="M.5.5h13v12H.5zM3.500 2.500h7v8h-7zM5 4.500h4M5 6.500h4M5 8.500h4" /></svg>
      </button>
      <button type="button" aria-label="分页预览" className="flex w-[38px] items-center justify-center">
        <svg width="14" height="12" viewBox="0 0 14 12" fill="none" stroke="#666"><path d="M.5 0v11.500h13V0M.5.5h5v6h-5M5.500.5h8M8.500.5v6h5" /></svg>
      </button>
      <button type="button" aria-label="缩小" className="ml-1">
        <svg width="7" height="8" viewBox="0 0 7 8"><path stroke="#555" strokeWidth="2" d="M0 4h6.500" /></svg>
      </button>
      <input
        type="range"
        aria-label="显示比例"
        defaultValue={50}
        className="mx-[3px] h-3 w-[100px] appearance-none bg-[linear-gradient(#a5a5a5,#a5a5a5)] bg-[length:100%_1px] bg-center bg-no-repeat [&::-webkit-slider-thumb]:h-[11px] [&::-webkit-slider-thumb]:w-1 [&::-webkit-slider-thumb]:appearance-none [&::-webkit-slider-thumb]:bg-[#5c5c5c]"
      />
      <button type="button" aria-label="放大" className="ml-px">
        <svg width="8" height="8" viewBox="0 0 8 8"><path stroke="#555" strokeWidth="2" d="M0 4h8M4 0v8" /></svg>
      </button>
      <span className="mr-[22px] ml-[15px]">100%</span>
    </footer>
  );
}

export default function App() {
  return (
    <div className={"flex h-screen flex-col overflow-hidden border-x border-b border-[#107043] bg-[#e6e6e6] " + UI}>
      <TitleBar />
      <Tabs />
      <Ribbon />
      <FormulaBar />
      <Sheet />
      <SheetTabs />
      <StatusBar />
    </div>
  );
}
